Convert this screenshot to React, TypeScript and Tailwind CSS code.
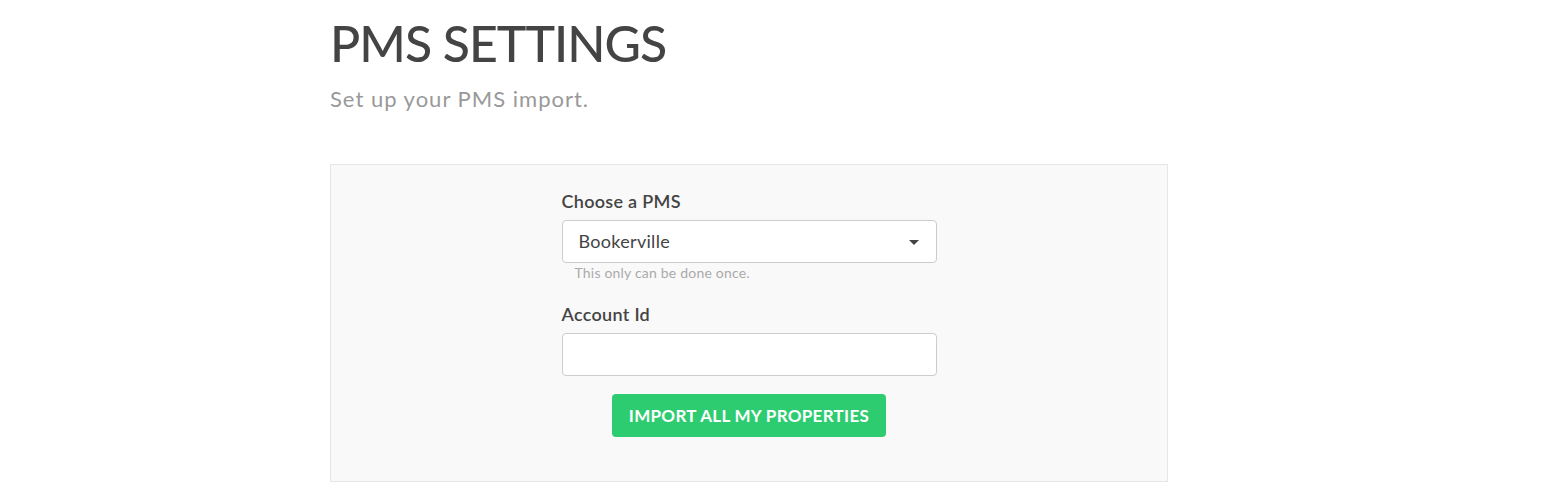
export default function App() {
    return (
        <div className="min-h-[497px] bg-white font-['Lato','Open_Sans',sans-serif]">
            <div className="ml-[330px] w-[838px] pt-[13px]">
                <h1 className="text-[50px] leading-[60px] font-medium text-[#444444] tracking-[-1px]">
                    PMS SETTINGS
                </h1>
                <p className="mt-[13px] text-[22px] leading-[26px] tracking-[1px] text-[#999999]">
                    Set up your PMS import.
                </p>

                <div className="mt-[52px] h-[318px] border border-[#e6e6e6] bg-[#f9f9f9]">
                    <div className="mx-auto w-[375px] pt-[24px]">
                        <label className="block text-[18px] leading-[24px] font-semibold tracking-[0.3px] text-[#444444]">
                            Choose a PMS
                        </label>
                        <div className="relative mt-[7px] flex h-[43px] items-center rounded-[4px] border border-[#cccccc] bg-white pl-[16px]">
                            <span className="text-[18px] tracking-[0.3px] text-[#444444]">
                                Bookerville
                            </span>
                            <span className="absolute right-[17px] top-[19px] h-0 w-0 border-x-[5px] border-t-[5px] border-x-transparent border-t-[#444444]" />
                        </div>
                        <p className="mt-[1px] pl-[13px] text-[14px] leading-[18px] tracking-[0.2px] text-[#aaaaaa]">
                            This only can be done once.
                        </p>

                        <label className="mt-[20px] block text-[18px] leading-[24px] font-semibold tracking-[0.3px] text-[#444444]">
                            Account Id
                        </label>
                        <input
                            type="text"
                            className="mt-[7px] block h-[43px] w-full rounded-[4px] border border-[#cccccc] bg-white px-[16px] outline-none"
                        />

                        <div className="mt-[18px] flex justify-center">
                            <button className="h-[43px] w-[274px] rounded-[4px] bg-[#2ecc71] text-[17px] font-bold tracking-[0.3px] text-white">
                                IMPORT ALL MY PROPERTIES
                            </button>
                        </div>
                    </div>
                </div>
            </div>
        </div>
    );
}
